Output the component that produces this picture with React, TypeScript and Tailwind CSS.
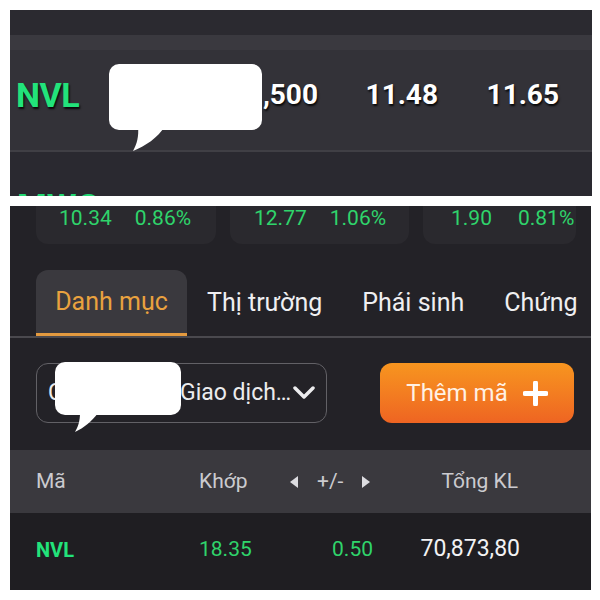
import React from "react";

const shadow = "[text-shadow:1px_2px_2px_rgba(0,0,0,0.85)]";

function Bubble({ className, tail }: { className: string; tail: React.ReactNode }) {
  return (
    <>
      <div className={`absolute bg-white rounded-[10px] ${className}`} />
      {tail}
    </>
  );
}

function TopPanel() {
  return (
    <div className="w-[582px] h-[186px] bg-[#2e2d33] overflow-hidden flex flex-col font-[Roboto,sans-serif]">
      <div className="h-[25px] bg-[#2b2a30]" />
      <div className="h-[15px] bg-[#3a393f]" />
      <div className="h-[100px] bg-[#333238] flex items-center pb-[10px] pl-[6px] text-white font-bold">
        <div className={`w-[62px] text-[34px] leading-none tracking-[-0.5px] text-[#22e37b] ${shadow}`}>NVL</div>
        <div className={`w-[240px] text-right text-[28px] leading-none ${shadow}`}>,500</div>
        <div className={`w-[120px] text-right text-[28px] leading-none ${shadow}`}>11.48</div>
        <div className={`w-[121px] text-right text-[28px] leading-none ${shadow}`}>11.65</div>
      </div>
      <div className="h-[2px] bg-[#403f45]" />
      <div className="h-[44px] bg-[#2a2930] pl-[7px] pt-[37px] overflow-hidden">
        <div className="text-[34px] leading-none font-bold text-[#22d873]">MWG</div>
      </div>
    </div>
  );
}

const cards = [
  { value: "10.34", pct: "0.86%", w: "w-[180px]", pl: "pl-[23px]", gap: "gap-[23px]" },
  { value: "12.77", pct: "1.06%", w: "w-[179px]", pl: "pl-[24px]", gap: "gap-[23px]" },
  { value: "1.90", pct: "0.81%", w: "w-[153px]", pl: "pl-[28px]", gap: "gap-[26px]" },
];

function Triangle({ dir }: { dir: "left" | "right" }) {
  return (
    <svg width="8" height="12" viewBox="0 0 8 12" className="shrink-0">
      <polygon points={dir === "left" ? "8,0 8,12 0,6" : "0,0 0,12 8,6"} fill="#dcdce0" />
    </svg>
  );
}

function BottomPanel() {
  return (
    <div className="w-[581px] h-[384px] mt-[10px] bg-[#232227] overflow-hidden flex flex-col font-[Roboto,sans-serif]">
      {/* index cards */}
      <div className="h-[38px] flex pl-[26px] gap-[14px]">
        {cards.map((c) => (
          <div
            key={c.value}
            className={`${c.w} ${c.pl} ${c.gap} shrink-0 h-[38px] rounded-b-[12px] bg-[#2a292e] flex items-start pt-[2px] text-[21px] leading-[21px] text-[#2fd46b]`}
          >
            <span>{c.value}</span>
            <span>{c.pct}</span>
          </div>
        ))}
      </div>

      {/* tabs */}
      <div className="mt-[26px] h-[66px] flex pl-[26px] text-[25px] text-[#efeff1]">
        <div className="w-[151px] shrink-0 h-[66px] rounded-t-[12px] bg-[#3a393e] border-b-[3px] border-[#e39a3f] flex items-center justify-center text-[#e9a23f] whitespace-nowrap">
          Danh mục
        </div>
        <div className="h-[66px] shrink-0 px-[20px] flex items-center whitespace-nowrap">Thị trường</div>
        <div className="h-[66px] shrink-0 px-[20px] flex items-center whitespace-nowrap">Phái sinh</div>
        <div className="h-[66px] shrink-0 px-[20px] flex items-center whitespace-nowrap">Chứng</div>
      </div>
      <div className="h-[2px] bg-[#4a494e]" />

      {/* controls */}
      <div className="h-[112px] flex items-start pt-[25px] pl-[26px]">
        <div className="w-[291px] shrink-0 h-[60px] rounded-[12px] border-[1.5px] border-[#626166] flex items-center pl-[11px] pr-[11px] text-[23px] text-[#ececee] whitespace-nowrap">
          <span className="w-[132px]">Chọn mục</span>
          <span>Giao dịch…</span>
          <svg width="22" height="14" viewBox="0 0 22 14" className="ml-auto">
            <polyline points="2,2 11,11 20,2" fill="none" stroke="#ececee" strokeWidth="3.5" strokeLinecap="round" strokeLinejoin="round" />
          </svg>
        </div>
        <button className="ml-[53px] w-[194px] shrink-0 h-[60px] rounded-[12px] bg-gradient-to-b from-[#f7951f] to-[#ee6422] flex items-center justify-center gap-[15px] text-[24px] text-[#fff1e4]">
          Thêm mã
          <svg width="25" height="25" viewBox="0 0 25 25">
            <path d="M12.5 2v21M2 12.5h21" stroke="#ffffff" strokeWidth="5" strokeLinecap="round" />
          </svg>
        </button>
      </div>

      {/* header */}
      <div className="h-[63px] bg-[#3a393e] flex items-center text-[21px] text-[#cbcbcf]">
        <div className="w-[189px] pl-[26px]">Mã</div>
        <div className="w-[91px]">Khớp</div>
        <div className="w-[83px] flex items-center gap-[19px]">
          <Triangle dir="left" />
          <span>+/-</span>
          <Triangle dir="right" />
        </div>
        <div className="w-[145px] text-right">Tổng KL</div>
      </div>

      {/* data row */}
      <div className="h-[77px] bg-[#1f1e22] flex items-center text-[21px] pb-[4px]">
        <div className="w-[189px] pl-[26px] font-bold text-[20px] text-[#22e37b]">NVL</div>
        <div className="w-[91px] text-[#2fd46b]">18.35</div>
        <div className="w-[83px] text-right text-[#2fd46b]">0.50</div>
        <div className="w-[147px] text-right text-[23px] text-[#f2f2f4]">70,873,80</div>
      </div>
    </div>
  );
}

export default function App() {
  return (
    <div className="relative w-[600px] h-[600px] bg-white pt-[10px] pl-[10px]">
      <TopPanel />
      <BottomPanel />

      <Bubble
        className="left-[109px] top-[64px] w-[153px] h-[66px]"
        tail={
          <svg width="40" height="28" viewBox="0 0 40 28" className="absolute left-[130px] top-[126px]">
            <path d="M8 0 C 9 10, 7 18, 3 25 C 15 20, 28 12, 35 0 Z" fill="#ffffff" />
          </svg>
        }
      />
      <Bubble
        className="left-[55px] top-[362px] w-[126px] h-[53px]"
        tail={
          <svg width="32" height="22" viewBox="0 0 32 22" className="absolute left-[70px] top-[413px]">
            <path d="M10 0 C 10 8, 8 14, 5 19 C 14 15, 22 8, 28 0 Z" fill="#ffffff" />
          </svg>
        }
      />
    </div>
  );
}
